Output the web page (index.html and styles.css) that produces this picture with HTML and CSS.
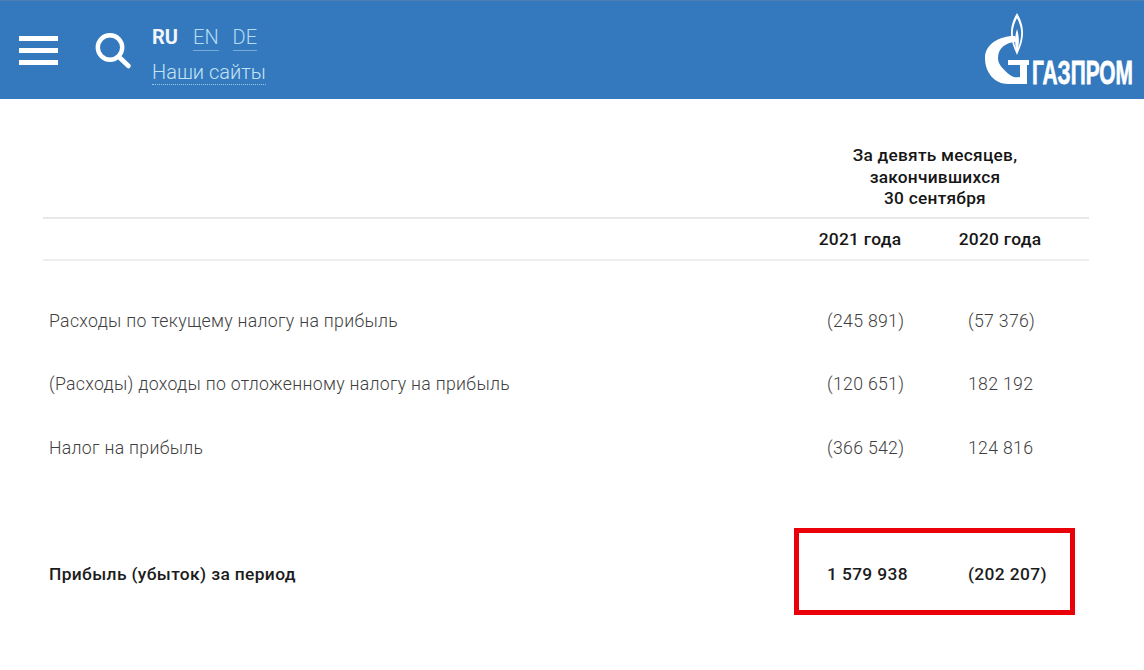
FILE: index.html
```html
<!DOCTYPE html>
<html lang="ru">
<head>
<meta charset="utf-8">
<title>Газпром</title>
<link rel="stylesheet" href="styles.css">
</head>
<body>
<header class="topbar">
  <div class="burger"><span></span><span></span><span></span></div>
  <svg class="search" width="38" height="38" viewBox="0 0 38 38" fill="none" stroke="#fff">
    <circle cx="16" cy="15.5" r="12.2" stroke-width="4.4"/>
    <path d="M24.5 24.5 L34.5 34" stroke-width="4.6" stroke-linecap="round"/>
  </svg>
  <div class="langbox">
    <div class="langs">
      <span class="lang-active">RU</span>
      <span class="lang">EN</span>
      <span class="lang">DE</span>
    </div>
    <div class="sites">Наши сайты</div>
  </div>
  <svg class="logo" width="150" height="76" viewBox="0 0 150 76">
    <path fill="#fff" fill-rule="evenodd" d="M33 0 C29.500 6 27 12 27 20 C27 28 30 35 33 42 C36 35 39 28 39 20 C39 12 36.500 6 33 0 Z M33 5 C30.500 10 28.800 15 28.800 20 C28.800 26 30.500 31 31.800 35 C30.800 29 30.600 24 33 16 C35.400 24 35.200 29 34.200 35 C35.500 31 37.200 26 37.200 20 C37.200 15 35.500 10 33 5 Z"/>
    <path fill="#fff" d="M31 23 C15 23 1 31 1 45 C1 60 11 71 24 71 L43 71 L43 52 L45 52 L45 47 L24 47 L24 52 L36 52 L36 64 C32 65 28 64 24 60.500 C18 55 14 51 14 45 C14 35 22 29 33 29 Z"/>
    <text class="logo-text" transform="translate(48 71) scale(1 1.5)" textLength="101" lengthAdjust="spacingAndGlyphs">ГАЗПРОМ</text>
  </svg>
</header>

<main class="report">
  <div class="head-title">За девять месяцев,<br>закончившихся<br>30 сентября</div>
  <div class="head-years">
    <span class="year">2021 года</span>
    <span class="year">2020 года</span>
  </div>
  <div class="rows">
    <div class="row"><span class="label">Расходы по текущему налогу на прибыль</span><span class="num">(245 891)</span><span class="num">(57 376)</span></div>
    <div class="row"><span class="label">(Расходы) доходы по отложенному налогу на прибыль</span><span class="num">(120 651)</span><span class="num">182 192</span></div>
    <div class="row"><span class="label">Налог на прибыль</span><span class="num">(366 542)</span><span class="num">124 816</span></div>
    <div class="row row-total"><span class="label">Прибыль (убыток) за период</span><span class="num">1 579 938</span><span class="num">(202 207)</span></div>
  </div>
  <div class="highlight"></div>
</main>
</body>
</html>
```
FILE: styles.css
```css
* { box-sizing: border-box; }
html, body { margin: 0; padding: 0; }
body {
  width: 1144px;
  height: 670px;
  overflow: hidden;
  background: #fff;
  font-family: Roboto, "Liberation Sans", sans-serif;
  color: #1f1f1f;
}
.topbar {
  height: 99px;
  background: #3478bd;
  border-top: 1px solid #4a7fb5;
  display: flex;
  align-items: flex-start;
  position: relative;
  color: #fff;
}
.burger {
  width: 39px;
  margin: 35px 0 0 19px;
  display: flex;
  flex-direction: column;
  gap: 7px;
}
.burger span { display: block; height: 5px; background: #fff; }
.search { margin: 31px 0 0 36px; }
.langbox { margin: 24px 0 0 20px; }
.langs { display: flex; gap: 15px; font-size: 20px; line-height: 24px; }
.lang-active { font-weight: 700; color: #f2f6fa; }
.lang { color: #b5dcf4; font-weight: 300; border-bottom: 1px solid #78acd8; height: 26px; }
.lang + .lang { margin-left: -1px; }
.sites {
  margin-top: 9px;
  font-size: 20px;
  line-height: 24px;
  font-weight: 300;
  color: #c4e4f5;
  border-bottom: 1px dotted #9ccbe9;
  width: 114px;
  white-space: nowrap;
}
.logo { margin: 12px 10px 0 auto; overflow: visible; }
.logo-text {
  font-family: "Liberation Sans Narrow", "Liberation Sans", sans-serif;
  font-weight: 700;
  font-size: 22px;
  fill: #fff;
  stroke: #fff;
  stroke-width: .5px;
}
.report {
  position: relative;
  margin: 0 55px 0 43px;
  height: 571px;
}
.head-title {
  margin-left: 747px;
  width: 290px;
  padding-top: 46px;
  height: 118px;
  text-align: center;
  font-size: 17.300px;
  line-height: 21.500px;
  font-weight: 500;
  letter-spacing: .25px;
  color: #161616;
}
.head-years {
  border-top: 2px solid #e8e8e8;
  border-bottom: 2px solid #eeeeee;
  height: 44px;
  display: grid;
  grid-template-columns: 747px 140px 140px;
  align-items: center;
  font-size: 17.400px;
  font-weight: 500;
  letter-spacing: .25px;
  color: #161616;
}
.year { text-align: center; }
.year:first-child { grid-column: 2; }
.rows { padding-top: 28px; }
.row {
  display: grid;
  grid-template-columns: 778px 141px 1fr;
  align-items: center;
  height: 63.500px;
  padding-left: 6px;
  font-size: 17.700px;
  font-weight: 300;
  letter-spacing: .3px;
  color: #3f3f3f;
}
.row-total {
  margin-top: 63px;
  color: #1c1c1c;
  font-weight: 500;
  font-size: 17.400px;
  letter-spacing: .35px;
}
.highlight {
  position: absolute;
  left: 751px;
  top: 429px;
  width: 281px;
  height: 87px;
  border: 5px solid #ea0008;
}
```
